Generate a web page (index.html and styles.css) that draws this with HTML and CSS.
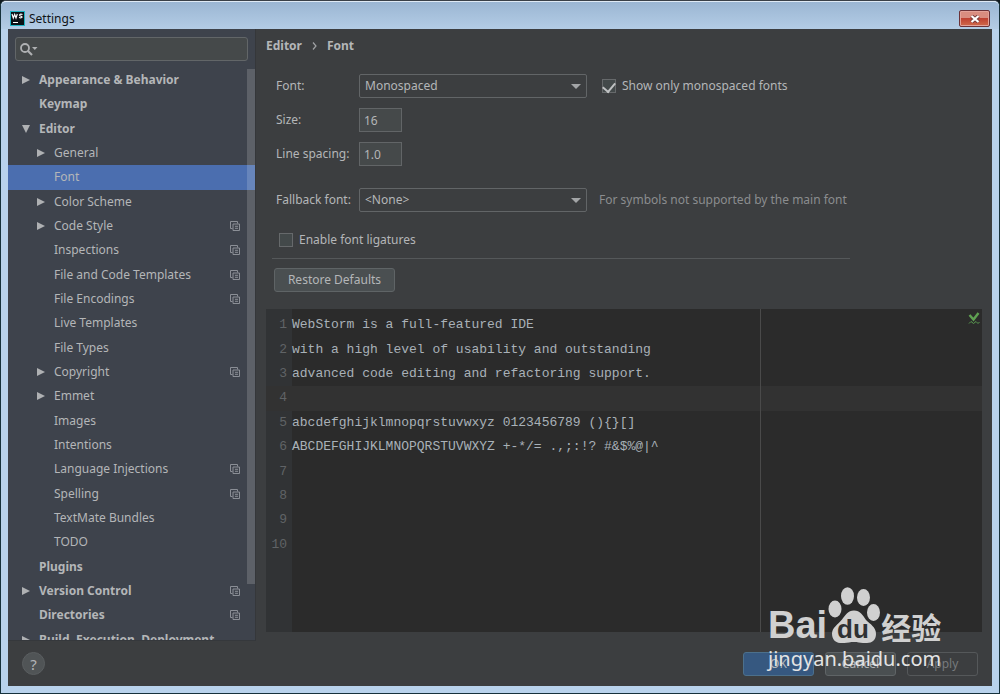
FILE: index.html
```html
<!DOCTYPE html>
<html lang="en">
<head>
<meta charset="utf-8">
<title>Settings</title>
<link rel="stylesheet" href="styles.css">
</head>
<body>
<svg class="sprite" aria-hidden="true">
  <symbol id="copy" viewBox="0 0 10 10"><path d="M2.500 7.500h-2v-7h7v2M3 3h6.500v6.500H3zM5 5.300h3M5 7.300h3" fill="none" stroke="currentColor"/></symbol>
  <symbol id="right" viewBox="0 0 8 8"><path d="M0 0l8 4-8 4z" fill="currentColor"/></symbol>
  <symbol id="down" viewBox="0 0 8 8"><path d="M0 0h8L4 8z" fill="currentColor"/></symbol>
</svg>
<div class="window">
  <header class="titlebar">
    <svg class="logo" viewBox="0 0 15 15" aria-hidden="true"><path d="M0 0h15v15H0z" fill="#20b4c4"/><path d="M1 1h13v13H1z" fill="#0b1216"/><path d="M2 3l1.300 4L4.700 3.500 6 7l1.300-4M12.500 3.500c-3-1-3.500 1-2 1.500 2.500.5 2 2.500-1.500 1.500M3 11.500h5" fill="none" stroke="#fff" stroke-width="1.200"/></svg>
    <span class="title">Settings</span>
    <button class="close" aria-label="Close"><svg viewBox="0 0 10 8"><path d="M1.500 1l7 6M8.500 1l-7 6" stroke="#7a3d3d" stroke-width="4"/><path d="M1.500 1l7 6M8.500 1l-7 6" stroke="#fff" stroke-width="2.200"/></svg></button>
  </header>
  <div class="body">
    <aside class="sidebar">
      <label class="search">
        <svg viewBox="0 0 18 13" aria-hidden="true"><circle cx="5" cy="5" r="4" fill="none" stroke="#afb1b3" stroke-width="1.800"/><path d="M8 8l4 4" stroke="#afb1b3" stroke-width="2.200"/><path d="M12 4h5.500l-2.700 3z" fill="#afb1b3"/></svg>
        <input type="text" aria-label="Search settings">
      </label>
      <div class="tree-view">
        <ul class="tree" role="tree">
          <li class="item top" role="treeitem"><svg class="arrow"><use href="#right"/></svg><span>Appearance &amp; Behavior</span></li>
          <li class="item top" role="treeitem"><span>Keymap</span></li>
          <li class="item top" role="treeitem"><svg class="arrow"><use href="#down"/></svg><span>Editor</span></li>
          <li class="item" role="treeitem"><svg class="arrow"><use href="#right"/></svg><span>General</span></li>
          <li class="item selected" role="treeitem" aria-selected="true"><span>Font</span></li>
          <li class="item" role="treeitem"><svg class="arrow"><use href="#right"/></svg><span>Color Scheme</span></li>
          <li class="item" role="treeitem"><svg class="arrow"><use href="#right"/></svg><span>Code Style</span><svg class="copy"><use href="#copy"/></svg></li>
          <li class="item" role="treeitem"><span>Inspections</span><svg class="copy"><use href="#copy"/></svg></li>
          <li class="item" role="treeitem"><span>File and Code Templates</span><svg class="copy"><use href="#copy"/></svg></li>
          <li class="item" role="treeitem"><span>File Encodings</span><svg class="copy"><use href="#copy"/></svg></li>
          <li class="item" role="treeitem"><span>Live Templates</span></li>
          <li class="item" role="treeitem"><span>File Types</span></li>
          <li class="item" role="treeitem"><svg class="arrow"><use href="#right"/></svg><span>Copyright</span><svg class="copy"><use href="#copy"/></svg></li>
          <li class="item" role="treeitem"><svg class="arrow"><use href="#right"/></svg><span>Emmet</span></li>
          <li class="item" role="treeitem"><span>Images</span></li>
          <li class="item" role="treeitem"><span>Intentions</span></li>
          <li class="item" role="treeitem"><span>Language Injections</span><svg class="copy"><use href="#copy"/></svg></li>
          <li class="item" role="treeitem"><span>Spelling</span><svg class="copy"><use href="#copy"/></svg></li>
          <li class="item" role="treeitem"><span>TextMate Bundles</span></li>
          <li class="item" role="treeitem"><span>TODO</span></li>
          <li class="item top" role="treeitem"><span>Plugins</span></li>
          <li class="item top" role="treeitem"><svg class="arrow"><use href="#right"/></svg><span>Version Control</span><svg class="copy"><use href="#copy"/></svg></li>
          <li class="item top" role="treeitem"><span>Directories</span><svg class="copy"><use href="#copy"/></svg></li>
          <li class="item top" role="treeitem"><svg class="arrow"><use href="#right"/></svg><span>Build, Execution, Deployment</span></li>
        </ul>
        <div class="thumb"></div>
      </div>
    </aside>
    <main class="main">
      <nav class="crumbs" aria-label="Breadcrumb"><span>Editor</span><svg viewBox="0 0 5 8" aria-hidden="true"><path d="M1 .5L4 4 1 7.500" fill="none" stroke="#a0a2a4" stroke-width="1.200"/></svg><span>Font</span></nav>
      <form class="form">
        <label for="font">Font:</label>
        <div class="combo"><select id="font"><option>Monospaced</option></select></div>
        <label class="check"><input type="checkbox" checked>Show only monospaced fonts</label>
        <label for="size">Size:</label>
        <input class="num" id="size" type="text" value="16">
        <label for="spacing">Line spacing:</label>
        <input class="num" id="spacing" type="text" value="1.0">
        <label class="apart" for="fallback">Fallback font:</label>
        <div class="combo apart"><select id="fallback"><option>&lt;None&gt;</option></select></div>
        <span class="hint apart">For symbols not supported by the main font</span>
      </form>
      <label class="check ligatures"><input type="checkbox">Enable font ligatures</label>
      <hr class="rule">
      <button class="btn restore">Restore Defaults</button>
      <section class="editor" aria-label="Font preview">
        <ol class="lines">
          <li><b>1</b><code>WebStorm is a full-featured IDE</code></li>
          <li><b>2</b><code>with a high level of usability and outstanding</code></li>
          <li><b>3</b><code>advanced code editing and refactoring support.</code></li>
          <li class="current"><b>4</b><code></code></li>
          <li><b>5</b><code>abcdefghijklmnopqrstuvwxyz 0123456789 (){}[]</code></li>
          <li><b>6</b><code>ABCDEFGHIJKLMNOPQRSTUVWXYZ +-*/= .,;:!? #&amp;$%@|^</code></li>
          <li><b>7</b><code></code></li>
          <li><b>8</b><code></code></li>
          <li><b>9</b><code></code></li>
          <li><b>10</b><code></code></li>
        </ol>
        <div class="margin-guide"></div>
        <svg class="ok-mark" viewBox="0 0 12 13" aria-hidden="true"><path d="M1.500 3l4 4.500L10.500 1" fill="none" stroke="#5fa052" stroke-width="2.400"/><path d="M1 11.500l2-2 2.500 2 2.500-2 2 2 1.500-1.500" fill="none" stroke="#5a9a50" stroke-width="1"/></svg>
      </section>
    </main>
  </div>
  <footer class="footer">
    <button class="help" aria-label="Help">?</button>
    <div class="actions">
      <button class="btn primary">OK</button>
      <button class="btn">Cancel</button>
      <button class="btn" disabled>Apply</button>
    </div>
  </footer>
</div>
<div class="watermark">
  <div class="brand">
    <span class="bai">Bai</span>
    <svg class="paw" viewBox="0 0 52 56" role="img" aria-label="du"><g fill="#d0d0d0"><ellipse cx="7" cy="22" rx="6.500" ry="8.500"/><ellipse cx="19.500" cy="9" rx="6.500" ry="8.800"/><ellipse cx="35.500" cy="10.500" rx="6.500" ry="8.500"/><ellipse cx="45.500" cy="25.500" rx="6.500" ry="8.500"/><path d="M26 23.500c6 0 9 5 12 9.500 4 4 10 7 10 14 0 6-4 9-9 9-5 .5-8-1-13-1s-9 1.500-14 1C7 55.500 4 52 4 46.500c0-6 6-9 10-14 3-4 6-9 12-9z"/></g><text class="du" x="25" y="51" text-anchor="middle">du</text></svg>
    <span class="jingyan">经验</span>
  </div>
  <div class="site">jingyan.baidu.com</div>
</div>
</body>
</html>
```
FILE: styles.css
```css
* { box-sizing: border-box; }
body {
  margin: 0;
  background: #10191d;
  color: #b4b6b8;
  font: 13px/18px "Noto Sans", "Open Sans", sans-serif;
}
input, select, button { font: inherit; color: inherit; }
button { padding: 0; }
.sprite { display: none; }

.window {
  display: flex;
  flex-direction: column;
  height: 100vh;
  padding: 0 7px 7px;
  border: 1px solid #16313b;
  border-top-color: #3a4048;
  border-radius: 6px 6px 0 0;
  background: #b8d2ec;
}
.titlebar {
  display: flex;
  align-items: center;
  gap: 4px;
  flex: 0 0 28px;
  margin: 0 -7px;
  padding: 6px 9px 0 9px;
  border-top: 1px solid #dfeaf5;
  border-radius: 5px 5px 0 0;
  background: linear-gradient(#9bb6d3, #b3cce5);
  color: #101418;
  font: 12px/16px "Noto Sans", sans-serif;
}
.logo { width: 15px; height: 15px; }
.close {
  width: 31px;
  height: 17px;
  margin-left: auto;
  display: grid;
  place-items: center;
  border: 1px solid #6b3238;
  border-radius: 2px;
  box-shadow: inset 0 0 0 1px #e3a299;
  background: linear-gradient(#d98d80 45%, #bf4232 50%, #cf6a4c);
}
.close svg { width: 10px; height: 8px; }

.body { display: flex; flex: 1; min-height: 0; }
.sidebar {
  display: flex;
  flex-direction: column;
  flex: 0 0 248px;
  border-right: 1px solid #35373a;
  border-bottom: 1px solid #35383c;
  background: #3e434c;
}
.search {
  display: flex;
  align-items: center;
  height: 24px;
  margin: 8px 7px 7px;
  padding-left: 4px;
  border: 1px solid #626668;
  border-radius: 3px;
  background: #45494a;
}
.search svg { flex: none; width: 18px; height: 13px; }
.search input { flex: 1; min-width: 0; border: 0; outline: 0; background: none; }
.tree-view { position: relative; flex: 1; overflow: hidden; }
.tree {
  display: flex;
  flex-direction: column;
  min-height: 584px;
  margin: 0;
  padding: 0;
  list-style: none;
}
.item {
  flex: 1;
  display: grid;
  grid-template-columns: 17px 1fr 30px;
  align-items: center;
  padding-left: 29px;
  font-size: 12px;
}
.item.top { padding-left: 14px; font-weight: bold; }
.item span { grid-column: 2; }
.arrow { width: 8px; height: 8px; color: #afb1b3; }
.copy { grid-column: 3; grid-row: 1; width: 10px; height: 10px; margin-left: 5px; color: #8b8f96; }
.selected { background: #4b6eaf; }
.thumb {
  position: absolute;
  top: 1px;
  right: 0;
  width: 8px;
  height: 90%;
  background: rgba(255, 255, 255, .16);
}

.main {
  display: flex;
  flex-direction: column;
  flex: 1;
  min-width: 0;
  padding: 8px 10px 9px;
  background: #3c3e40;
}
.crumbs {
  display: flex;
  align-items: center;
  gap: 10px;
  font-size: 12px;
  font-weight: bold;
}
.crumbs svg { width: 5px; height: 8px; }
.form {
  display: grid;
  grid-template-columns: 83px 228px 1fr;
  row-gap: 10px;
  align-items: center;
  margin: 19px 0 0 10px;
}
.form, .check, .btn { font-size: 12px; }
.form > label:not(.check) { grid-column: 1; }
.apart { margin-top: 12px; }
.combo { position: relative; }
.combo select {
  display: block;
  width: 100%;
  height: 24px;
  padding: 0 5px;
  appearance: none;
  border: 1px solid #626567;
  border-radius: 2px;
  background: #3c3e40;
}
.combo::after {
  content: "";
  position: absolute;
  top: 10px;
  right: 6px;
  border: 5px solid transparent;
  border-top-color: #a3a5a7;
  border-bottom: 0;
}
.num {
  width: 43px;
  height: 24px;
  padding: 0 4px;
  border: 1px solid #626567;
  background: #45494a;
}
.check { display: flex; align-items: center; gap: 6px; }
.form .check { margin-left: 15px; }
.check input {
  display: grid;
  place-items: center;
  width: 14px;
  height: 14px;
  margin: 0;
  appearance: none;
  border: 1px solid #66696b;
  background: #43494a;
}
.check input:checked::before {
  content: "";
  width: 6px;
  height: 10px;
  margin-bottom: 3px;
  border: solid #c0c2c3;
  border-width: 0 2px 2px 0;
  transform: rotate(40deg);
}
.hint { margin-left: 12px; color: #8b8d8f; }
.ligatures { margin: 19px 0 0 13px; }
.rule {
  width: 578px;
  margin: 9px 0 9px 6px;
  border: 0;
  border-top: 1px solid #55585a;
}
.btn {
  width: 71px;
  height: 24px;
  border: 1px solid #5f6466;
  border-radius: 3px;
  background: #4a4f51;
}
.restore { width: 121px; margin-left: 8px; }
.editor {
  position: relative;
  flex: 1;
  min-height: 0;
  margin-top: 17px;
  padding-top: 4px;
  background: linear-gradient(90deg, #313335 26px, #2b2b2b 26px);
}
.lines {
  display: flex;
  flex-direction: column;
  min-height: 244px;
  margin: 0;
  padding: 0;
  list-style: none;
}
.lines li {
  flex: 1;
  display: grid;
  grid-template-columns: 21px 1fr;
  column-gap: 5px;
  align-items: center;
}
.lines b, .lines code { font: 13px/18px "Liberation Mono", monospace; white-space: pre; }
.lines b { text-align: right; color: #606366; }
.lines code { color: #a9b1b8; }
.lines .current { background: #323232; }
.margin-guide { position: absolute; top: 0; bottom: 0; left: 69%; width: 1px; background: #4a4a4a; }
.ok-mark { position: absolute; top: 3px; right: 2px; width: 12px; height: 13px; }

.footer {
  display: flex;
  align-items: center;
  flex: 0 0 45px;
  padding: 0 14px;
  background: #3c3e40;
}
.help {
  width: 23px;
  height: 23px;
  border: 1px solid #5a5e60;
  border-radius: 50%;
  background: #505456;
  font-size: 15px;
}
.actions { display: flex; gap: 11px; margin-left: auto; }
.primary { border-color: #4c708c; background: #365880; }
.btn:disabled { border-color: #55585a; background: #3c3e40; color: #777a7c; }

.watermark {
  position: absolute;
  right: 54px;
  bottom: 22px;
  width: 178px;
  color: #d0d0d0;
  pointer-events: none;
}
.brand { display: flex; align-items: flex-end; gap: 1px; height: 56px; }
.bai { font: bold 38px/36px "Liberation Sans", sans-serif; }
.paw { flex: none; width: 52px; height: 56px; }
.du { font: bold 26px "Liberation Sans", sans-serif; fill: #2f3133; }
.jingyan { font: bold 30px/34px "Noto Sans CJK SC", sans-serif; white-space: nowrap; }
.site { margin-top: 3px; font: 20px/26px "Noto Sans", sans-serif; color: #e4e4e4; white-space: nowrap; }
```
